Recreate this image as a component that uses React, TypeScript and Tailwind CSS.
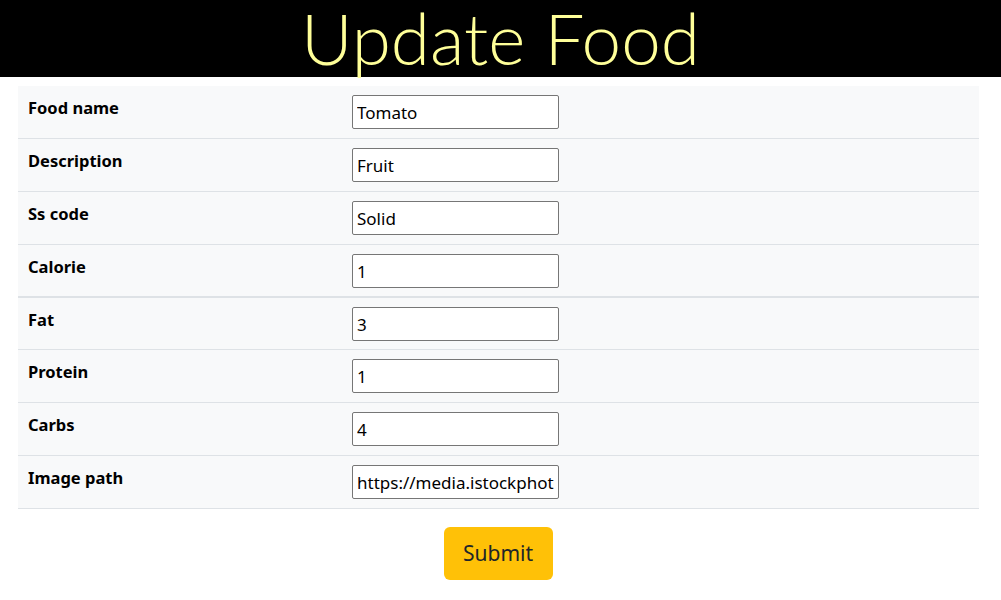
import React from "react";

const rows: [string, string][] = [
  ["Food name", "Tomato"],
  ["Description", "Fruit"],
  ["Ss code", "Solid"],
  ["Calorie", "1"],
  ["Fat", "3"],
  ["Protein", "1"],
  ["Carbs", "4"],
  ["Image path", "https://media.istockphoto.com/photos/tomato.jpg"],
];

export default function App() {
  return (
    <div className="min-h-[600px] bg-white" style={{ fontFamily: '"Noto Sans", "Open Sans", sans-serif' }}>
      <div className="h-[77px] bg-black flex justify-center">
        <h1
          className="text-[71px] leading-[75px] font-light text-[#ffff99] whitespace-nowrap"
          style={{ fontFamily: 'Lato, "Open Sans", sans-serif' }}
        >
          Update Food
        </h1>
      </div>
      <div className="pl-[18px] pr-[22px] pt-[9px]">
        <div className="bg-[#f8f9fa]">
          {rows.map(([label, value], i) => (
            <div
              key={label}
              className={`grid grid-cols-[334px_1fr] border-[#dee2e6] ${i === 3 ? "border-b-2" : "border-b"}`}
            >
              <div className="pl-[10px] pt-[10px] text-[16.5px] leading-[24px] font-bold text-black">{label}</div>
              <div className={i === 3 || i === 4 ? "pt-[9px] pb-[8px]" : "py-[9px]"}>
                <input
                  readOnly
                  value={value}
                  className="block w-[207px] h-[34px] border border-[#767676] rounded-[2px] bg-white px-[4px] text-[17px] text-black outline-none"
                />
              </div>
            </div>
          ))}
        </div>
        <div className="flex justify-center pt-[18px]">
          <button className="w-[109px] h-[53px] bg-[#ffc107] rounded-[6px] text-[21px] text-[#212529] mr-[1px]">
            Submit
          </button>
        </div>
      </div>
    </div>
  );
}
